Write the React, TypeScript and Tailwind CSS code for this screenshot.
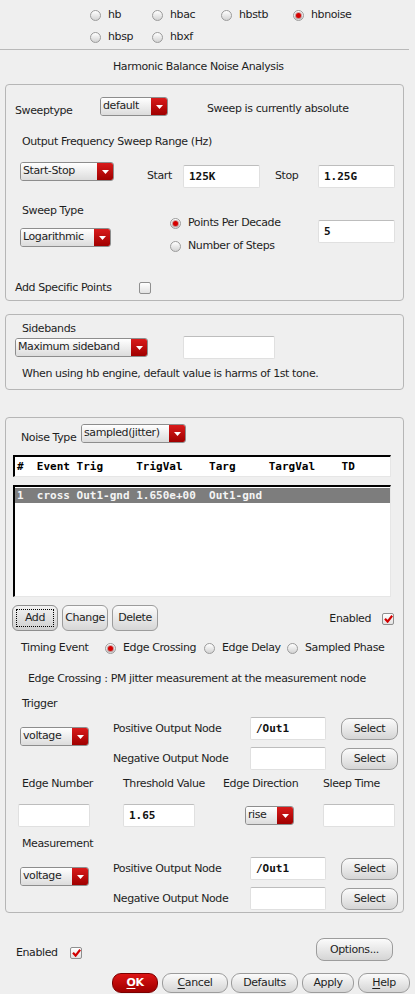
import React from 'react';

function Radio({ on }: { on?: boolean }) {
  return (
    <span className="flex h-[11px] w-[11px] shrink-0 items-center justify-center rounded-full border border-[#9b9b9b] bg-linear-to-b from-white to-[#d3d3d3]">
      {on && <span className="h-[5px] w-[5px] rounded-full bg-[#d60000] shadow-[0_0_0_1px_rgba(140,0,0,0.35)]" />}
    </span>
  );
}

function Check({ on }: { on?: boolean }) {
  return (
    <span className="flex h-[12px] w-[12px] shrink-0 items-center justify-center rounded-[2px] border border-[#8f8f8f] bg-linear-to-b from-white to-[#e2e2e2]">
      {on && (
        <svg width="9" height="8" viewBox="0 0 9 8">
          <path d="M1 3.8 L3.6 6.6 L8.2 0.8" stroke="#d20000" strokeWidth="2.2" fill="none" />
        </svg>
      )}
    </span>
  );
}

function Combo({ label, w }: { label: string; w: string }) {
  return (
    <div className={`flex h-[19px] shrink-0 overflow-hidden rounded-[3px] border border-[#8d8d8d] ${w}`}>
      <span className="flex-1 bg-linear-to-b from-white to-[#dcdcdc] pl-[2px] leading-[16px] whitespace-nowrap">{label}</span>
      <span className="flex w-[16px] items-center justify-center bg-linear-to-b from-[#d91a1a] to-[#a00000]">
        <svg width="7" height="4" viewBox="0 0 7 4">
          <path d="M0 0 H7 L3.5 4 Z" fill="#fff" />
        </svg>
      </span>
    </div>
  );
}

function Field({ value, w }: { value?: string; w: string }) {
  return (
    <div
      className={`h-[23px] shrink-0 rounded-[2px] border border-[#e0e0e0] border-t-[#bdbdbd] bg-white px-[5px] font-['DejaVu_Sans_Mono',monospace] text-[11px] font-bold leading-[21px] tracking-normal text-[#111] ${w}`}
    >
      {value}
    </div>
  );
}

function SelectBtn() {
  return (
    <div className="ml-[15px] flex h-[22px] w-[57px] items-center justify-center rounded-[8px] border border-[#9c9c9c] bg-linear-to-b from-[#fbfbfb] to-[#d5d5d5]">
      Select
    </div>
  );
}

function NodeBlock() {
  return (
    <div className="flex">
      <div className="ml-[14px] mt-[10px]">
        <Combo label="voltage" w="w-[69px]" />
      </div>
      <div className="ml-[24px] flex flex-col gap-[7px]">
        <div className="flex h-[23px] items-center">
          <span className="w-[137px]">Positive Output Node</span>
          <Field value="/Out1" w="w-[76px]" />
          <SelectBtn />
        </div>
        <div className="flex h-[23px] items-center">
          <span className="w-[137px]">Negative Output Node</span>
          <Field w="w-[76px]" />
          <SelectBtn />
        </div>
      </div>
    </div>
  );
}

export default function App() {
  return (
    <div className="h-[994px] w-[415px] overflow-hidden bg-[#efefef] font-['DejaVu_Sans',sans-serif] text-[11px] leading-[14px] tracking-[-0.4px] text-[#1e1e1e]">
      {/* analysis choice */}
      <div className="pt-[4px]">
        <div className="ml-[90px] flex h-[22px] items-center">
          <div className="flex w-[62px] items-center gap-[7px]"><Radio />hb</div>
          <div className="flex w-[69px] items-center gap-[7px]"><Radio />hbac</div>
          <div className="flex w-[72px] items-center gap-[7px]"><Radio />hbstb</div>
          <div className="flex items-center gap-[7px]"><Radio on />hbnoise</div>
        </div>
        <div className="ml-[90px] flex h-[22px] items-center">
          <div className="flex w-[62px] items-center gap-[7px]"><Radio />hbsp</div>
          <div className="flex items-center gap-[7px]"><Radio />hbxf</div>
        </div>
      </div>
      <div className="mt-[1px] h-px w-[409px] bg-[#b9b9b9]" />
      <div className="flex h-[34px] items-center pl-[113px]">Harmonic Balance Noise Analysis</div>

      {/* sweep box */}
      <div className="mx-[5px] h-[217px] w-[399px] rounded-[4px] border border-[#b6b6b6]">
        <div className="mt-[12px] flex h-[19px] items-center pl-[9px]">
          <span className="w-[85px] pt-[8px]">Sweeptype</span>
          <Combo label="default" w="w-[68px]" />
          <span className="ml-[39px] pt-[4px]">Sweep is currently absolute</span>
        </div>
        <div className="mt-[19px] pl-[16px]">Output Frequency Sweep Range (Hz)</div>
        <div className="mt-[13px] flex items-start pl-[14px]">
          <Combo label="Start-Stop" w="w-[94px]" />
          <span className="ml-[33px] mt-[7px] w-[36px]">Start</span>
          <div className="mt-[3px]"><Field value="125K" w="w-[77px]" /></div>
          <span className="ml-[15px] mt-[7px] w-[43px]">Stop</span>
          <div className="mt-[3px]"><Field value="1.25G" w="w-[77px]" /></div>
        </div>
        <div className="mt-[16px] flex items-start pl-[14px]">
          <div className="w-[91px]">
            <div className="pl-[2px]">Sweep Type</div>
            <div className="mt-[10px]"><Combo label="Logarithmic" w="w-[91px]" /></div>
          </div>
          <div className="ml-[59px] w-[148px] pt-[8px]">
            <div className="flex h-[22px] items-center gap-[7px]"><Radio on />Points Per Decade</div>
            <div className="mt-[1px] flex h-[22px] items-center gap-[7px]"><Radio />Number of Steps</div>
          </div>
          <div className="mt-[16px]"><Field value="5" w="w-[77px]" /></div>
        </div>
        <div className="mt-[24px] flex items-center pl-[9px]">
          <span className="w-[124px]">Add Specific Points</span>
          <Check />
        </div>
      </div>

      {/* sidebands box */}
      <div className="mx-[5px] mt-[13px] h-[76px] w-[399px] rounded-[4px] border border-[#b6b6b6]">
        <div className="mt-[7px] pl-[16px]">Sidebands</div>
        <div className="flex h-[23px] items-center pl-[9px]">
          <Combo label="Maximum sideband" w="w-[133px]" />
          <div className="ml-[35px]"><Field w="w-[92px]" /></div>
        </div>
        <div className="mt-[8px] pl-[16px]">When using hb engine, default value is harms of 1st tone.</div>
      </div>

      {/* noise box */}
      <div className="mx-[5px] mt-[27px] h-[496px] w-[399px] rounded-[4px] border border-[#b6b6b6]">
        <div className="mt-[6px] flex h-[19px] items-center pl-[15px]">
          <span className="w-[60px] pt-[8px]">Noise Type</span>
          <Combo label="sampled(jitter)" w="w-[105px]" />
        </div>
        <div className="ml-[7px] mt-[12px] h-[22px] w-[378px] border-b border-l-2 border-r border-t-2 border-b-[#e6e6e6] border-l-black border-r-[#e6e6e6] border-t-black bg-white pl-[2px] font-['DejaVu_Sans_Mono',monospace] font-bold leading-[19px] tracking-normal whitespace-pre text-black">
          {'#  Event Trig     TrigVal    Targ     TargVal    TD'}
        </div>
        <div className="ml-[7px] mt-[8px] h-[112px] w-[378px] border-b border-l-2 border-r border-t-2 border-b-[#e6e6e6] border-l-black border-r-[#e6e6e6] border-t-black bg-white">
          <div className="mt-[1px] h-[15px] bg-[#7d7d7d] pl-[2px] font-['DejaVu_Sans_Mono',monospace] font-bold leading-[15px] tracking-normal whitespace-pre text-[#f4f4f4]">
            {'1  cross Out1-gnd 1.650e+00  Out1-gnd'}
          </div>
        </div>
        <div className="mt-[8px] flex h-[26px] items-center pl-[6px] pr-[9px]">
          <div className="flex h-[26px] w-[46px] items-center justify-center rounded-[6px] border border-[#8e8e8e] bg-linear-to-b from-[#f2f2f2] to-[#cfcfcf] p-[3px]">
            <div className="flex h-full w-full items-center justify-center border border-dotted border-black">Add</div>
          </div>
          <div className="ml-[4px] flex h-[26px] w-[46px] items-center justify-center rounded-[6px] border border-[#9c9c9c] bg-linear-to-b from-[#fbfbfb] to-[#d6d6d6]">Change</div>
          <div className="ml-[4px] flex h-[26px] w-[46px] items-center justify-center rounded-[6px] border border-[#9c9c9c] bg-linear-to-b from-[#fbfbfb] to-[#d6d6d6]">Delete</div>
          <span className="ml-auto mr-[11px] pt-[2px]">Enabled</span>
          <span className="pt-[2px]"><Check on /></span>
        </div>
        <div className="mt-[10px] flex h-[14px] items-center pl-[15px]">
          <span className="w-[84px]">Timing Event</span>
          <div className="flex w-[99px] items-center gap-[7px]"><Radio on />Edge Crossing</div>
          <div className="flex w-[83px] items-center gap-[7px]"><Radio />Edge Delay</div>
          <div className="flex items-center gap-[7px]"><Radio />Sampled Phase</div>
        </div>
        <div className="mt-[17px] pl-[22px]">Edge Crossing : PM jitter measurement at the measurement node</div>
        <div className="mt-[11px] pl-[16px]">Trigger</div>
        <div className="mt-[6px]">
          <NodeBlock />
        </div>
        <div className="mt-[7px] flex pl-[16px]">
          <span className="w-[101px]">Edge Number</span>
          <span className="w-[100px]">Threshold Value</span>
          <span className="w-[100px]">Edge Direction</span>
          <span>Sleep Time</span>
        </div>
        <div className="mt-[13px] flex items-center pl-[12px]">
          <Field w="w-[72px]" />
          <div className="ml-[33px]"><Field value="1.65" w="w-[72px]" /></div>
          <div className="ml-[50px]"><Combo label="rise" w="w-[49px]" /></div>
          <div className="ml-[29px]"><Field w="w-[72px]" /></div>
        </div>
        <div className="mt-[10px] pl-[16px]">Measurement</div>
        <div className="mt-[6px]">
          <NodeBlock />
        </div>
      </div>

      {/* footer */}
      <div className="mt-[25px] flex h-[23px] items-center pl-[16px] pr-[22px]">
        <span className="w-[54px] pt-[6px]">Enabled</span>
        <span className="pt-[6px]"><Check on /></span>
        <div className="ml-auto flex h-[23px] w-[77px] items-center justify-center rounded-[8px] border border-[#9c9c9c] bg-linear-to-b from-[#fbfbfb] to-[#d5d5d5]">Options...</div>
      </div>
      <div className="mt-[12px] flex h-[20px] items-center pl-[112px]">
        <div className="flex h-[20px] w-[46px] items-center justify-center rounded-[9px] border border-[#7a0000] bg-linear-to-b from-[#dc1414] to-[#a00000] font-bold text-white">
          <span className="underline underline-offset-2">O</span>K
        </div>
        <div className="ml-[4px] flex h-[20px] w-[66px] items-center justify-center rounded-[9px] border border-[#9c9c9c] bg-linear-to-b from-[#fbfbfb] to-[#d5d5d5]">
          <span className="underline underline-offset-2">C</span>ancel
        </div>
        <div className="ml-[3px] flex h-[20px] w-[67px] items-center justify-center rounded-[9px] border border-[#9c9c9c] bg-linear-to-b from-[#fbfbfb] to-[#d5d5d5]">Defaults</div>
        <div className="ml-[4px] flex h-[20px] w-[52px] items-center justify-center rounded-[9px] border border-[#9c9c9c] bg-linear-to-b from-[#fbfbfb] to-[#d5d5d5]">Apply</div>
        <div className="ml-[4px] flex h-[20px] w-[52px] items-center justify-center rounded-[9px] border border-[#9c9c9c] bg-linear-to-b from-[#fbfbfb] to-[#d5d5d5]">
          <span className="underline underline-offset-2">H</span>elp
        </div>
      </div>
    </div>
  );
}
